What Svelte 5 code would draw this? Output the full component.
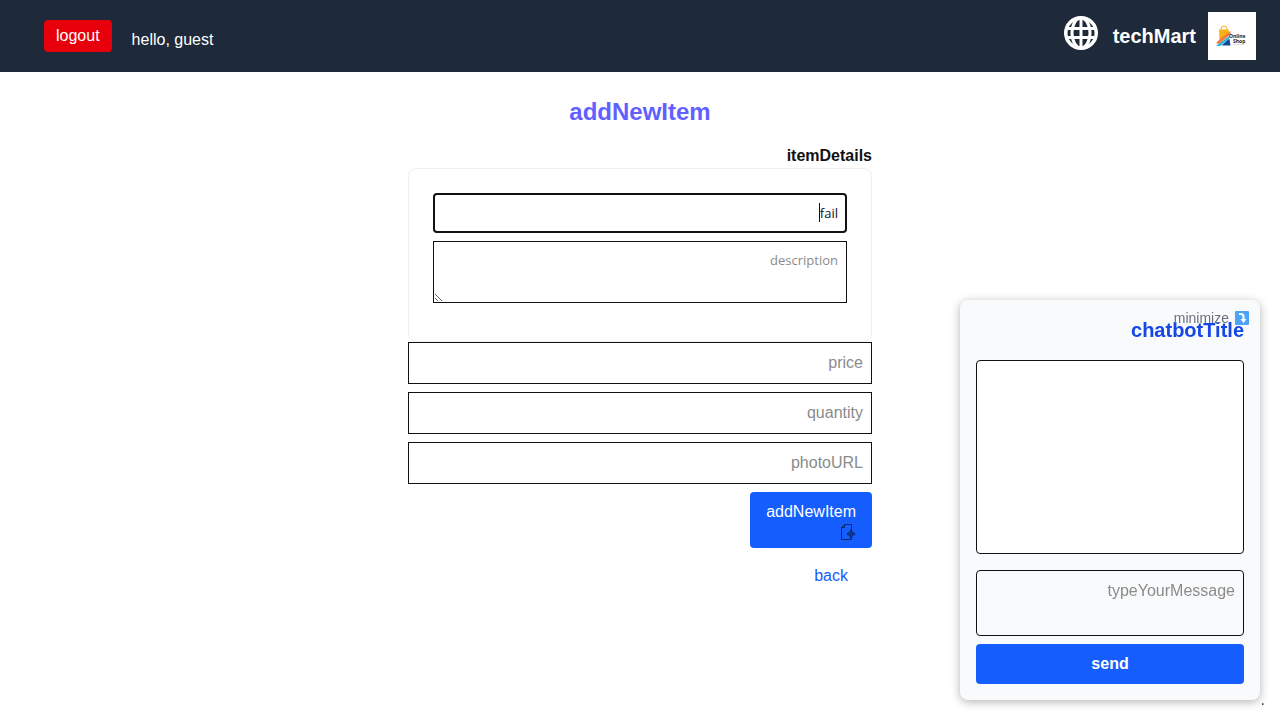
<script>
  import { onMount } from 'svelte';

  let name = $state('fail');
  let description = $state('');
  let message = $state('');
  let nameInput;

  const fields = [
    { id: 'price', label: 'price' },
    { id: 'quantity', label: 'quantity' },
    { id: 'photo', label: 'photoURL' }
  ];

  onMount(() => {
    nameInput.focus();
    nameInput.setSelectionRange(name.length, name.length);
  });
</script>

<div class="page" dir="rtl">
  <header>
    <div class="brand">
      <svg class="logo" viewBox="0 0 48 48" role="img" aria-label="Online Shop">
        <rect width="48" height="48" fill="#fff" />
        <path d="M13 18v-1a3 3 0 0 1 6 0v1" fill="none" stroke="#f9ab15" stroke-width="1" />
        <path d="M11 17.500h9.500l.5 3L11.500 28z" fill="#fcb017" />
        <path d="M22.500 19v3.500L11 32l-3-1 5-5z" fill="#f47b3c" />
        <path d="M21.500 24v2L12 34H8z" fill="#18b4dc" />
        <path d="M20 27.500l1.500-.5 1 6.500H13.500z" fill="#12489c" />
        <text x="21" y="25.500">Online</text>
        <text x="25" y="30.500">Shop</text>
        <path d="M25 32.500h11" stroke="#bbb" stroke-width=".5" />
      </svg>
      <span class="brand-name">techMart</span>
      <svg class="globe" viewBox="0 0 34 34" aria-hidden="true">
        <g fill="none" stroke="#fff" stroke-width="3">
          <circle cx="17" cy="17" r="15.250" stroke-width="3.500" />
          <ellipse cx="17" cy="17" rx="9" ry="15" />
          <path d="M17 2v30M4 12.500h26M4 21.500h26" />
        </g>
      </svg>
    </div>
    <div class="user">
      <span class="hello">hello, guest</span>
      <button class="logout" type="button">logout</button>
    </div>
  </header>

  <main>
    <h1>addNewItem</h1>
    <form onsubmit={(e) => e.preventDefault()}>
      <h2>itemDetails</h2>
      <div class="card">
        <div class="name-box">
          <input bind:this={nameInput} bind:value={name} class="name" aria-label="name" />
          <span class="caret"></span>
        </div>
        <textarea bind:value={description} class="description" placeholder="description" aria-label="description"></textarea>
      </div>
      <div class="fields">
        {#each fields as field (field.id)}
          <input id={field.id} placeholder={field.label} aria-label={field.label} />
        {/each}
        <button class="add" type="submit">
          <span>addNewItem</span>
          <svg viewBox="0 0 16 16" aria-hidden="true">
            <path d="M11.500 6V.5H4.500L1.500 3.500v12h10V14M4.500 .5v3h-3" fill="none" stroke="#0a2a70" />
            <path d="M11 5l1.500 2v1.500H14l1.500 1.500-1.500 1.500h-1.500V13L11 15l-1.500-2v-1.500H8L6.500 10 8 8.500h1.500V7z" fill="#0a2a70" />
            <path d="M11 7v6M8 10h6" stroke="#1957cf" stroke-width=".5" />
          </svg>
        </button>
        <a class="back" href="#back">back</a>
      </div>
    </form>
  </main>

  <aside>
    <button class="minimize" type="button">
      <svg viewBox="0 0 14 14" aria-hidden="true">
        <rect width="14" height="14" rx="1" fill="#4da3f7" />
        <path d="M4 3h2q2.500 0 2.500 2.500V9" fill="none" stroke="#fff" stroke-width="2" />
        <path d="M5.500 8h6l-3 4z" fill="#fff" />
      </svg>
      <span>minimize</span>
    </button>
    <h2 class="chat-title">chatbotTitle</h2>
    <div class="messages"></div>
    <textarea bind:value={message} class="message" placeholder="typeYourMessage" aria-label="typeYourMessage"></textarea>
    <button class="send" type="button">send</button>
  </aside>
  <span class="dot" dir="ltr">.</span>
</div>

<style>
  :global(body) { background: #fff; }
  .page {
    font: 16px/24px "Liberation Sans", Arial, sans-serif;
    color: #111;
  }
  .page * { box-sizing: border-box; }
  h1, h2 { margin: 0; }
  button, input, textarea { font: inherit; color: inherit; margin: 0; }
  button { border: 0; cursor: pointer; }
  a { text-decoration: none; }

  header {
    display: flex;
    justify-content: space-between;
    align-items: center;
    padding: 12px 24px;
    background: #1e2939;
    color: #fff;
  }
  .brand { display: flex; align-items: center; gap: 12px; }
  .logo { width: 48px; height: 48px; }
  .logo text {
    direction: ltr;
    font: bold 5px "Open Sans", sans-serif;
    fill: #222;
  }
  .brand-name { font-size: 20px; line-height: 28px; font-weight: bold; }
  .globe { width: 34px; height: 34px; margin: 0 3px 6px 0; }
  .user { display: flex; align-items: center; gap: 20px; padding-left: 20px; }
  .hello { padding-top: 8px; }
  .logout {
    padding: 4px 12px;
    border-radius: 4px;
    background: #e7000b;
    line-height: 24px;
  }

  main {
    max-width: 512px;
    margin: 0 auto;
    padding: 24px;
    box-sizing: border-box;
  }
  h1 {
    margin-bottom: 16px;
    text-align: center;
    font-size: 24px;
    line-height: 32px;
    color: #615fff;
  }
  form h2 { font-size: 16px; line-height: 24px; }
  .card {
    display: flex;
    flex-direction: column;
    gap: 8px;
    padding: 24px 24px 38px;
    border: 1px solid #f0f0f0;
    border-radius: 8px;
    font: 13px/20px "Open Sans", sans-serif;
  }
  input, textarea {
    display: block;
    width: 100%;
    padding: 8px;
    border: 1px solid #111;
    border-radius: 0;
    background: transparent;
  }
  input { height: 42px; }
  input::placeholder, textarea::placeholder { color: #8b8b8b; opacity: 1; }
  .name-box { position: relative; }
  .name {
    height: 40px;
    padding: 8px 7px;
    border: 2px solid #111;
    border-radius: 4px;
    outline: 0;
    caret-color: transparent;
  }
  .caret {
    position: absolute;
    top: 10px;
    right: 27px;
    width: 1px;
    height: 19px;
    background: #111;
  }
  .description { height: 62px; }
  .fields { display: flex; flex-direction: column; align-items: flex-start; gap: 8px; }
  .add {
    display: flex;
    flex-direction: column;
    align-items: flex-start;
    padding: 8px 16px;
    border-radius: 4px;
    background: #155dfc;
    color: #fff;
  }
  .add svg { width: 16px; height: 16px; }
  .back { padding: 8px 24px; color: #155dfc; }

  aside {
    position: fixed;
    right: 20px;
    bottom: 20px;
    display: flex;
    flex-direction: column;
    width: 300px;
    padding: 16px;
    border-radius: 8px;
    background: #f9fafb;
    box-shadow: 0 2px 10px rgba(0, 0, 0, 0.3);
  }
  .minimize {
    position: absolute;
    top: 8px;
    right: 11px;
    display: flex;
    align-items: center;
    gap: 6px;
    padding: 0;
    background: none;
    font-size: 14px;
    line-height: 20px;
    color: #6a7282;
  }
  .minimize svg { width: 14px; height: 14px; }
  .chat-title {
    margin-bottom: 16px;
    font-size: 20px;
    line-height: 28px;
    color: #1447e6;
  }
  .messages {
    height: 194px;
    margin-bottom: 16px;
    border: 1px solid #111;
    border-radius: 4px;
    background: #fff;
  }
  .message { height: 66px; margin-bottom: 8px; border-radius: 4px; resize: none; }
  .send {
    padding: 8px;
    border-radius: 4px;
    background: #155dfc;
    color: #fff;
    font-weight: bold;
  }
  .dot { position: fixed; right: 15px; bottom: 8px; color: #444; }
</style>
